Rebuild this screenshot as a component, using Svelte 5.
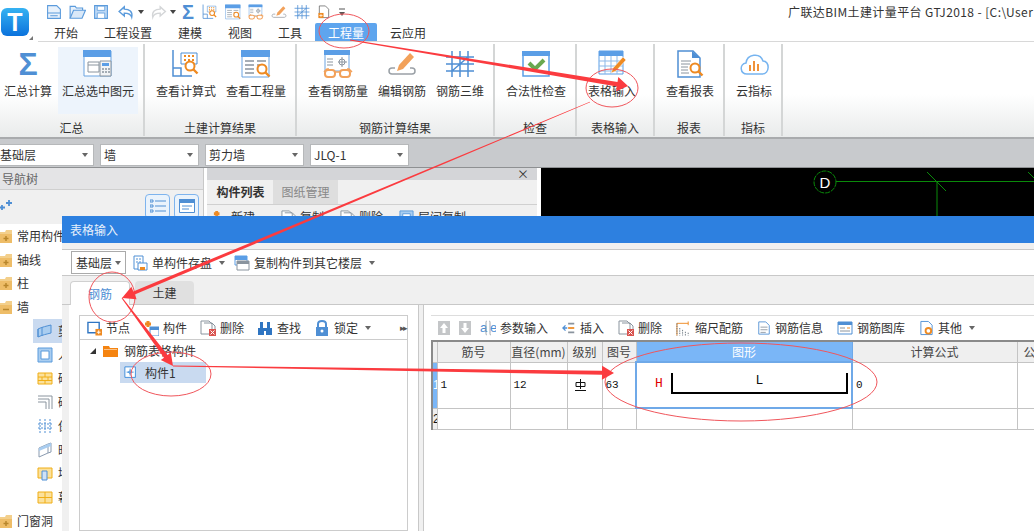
<script>
const qat = [
	["new", 16, 16], ["open", 17, 16], ["save", 16, 16], ["undo", 20, 16], ["caret"], ["redo", 19, 16, true], ["caret"],
	["sigma", 14, 16], ["calcview", 16, 16], ["qtyview", 16, 16], ["glasses", 16, 16], ["pencil", 16, 16], ["rebar3d", 16, 16], ["doc", 14, 16], ["more"]
];

const tabs = ["开始", "工程设置", "建模", "视图", "工具", "工程量", "云应用"];

const groups = [
	{ title: "汇总", width: 145, pad: 0, items: [["sigma", "汇总计算"], ["winCalc", "汇总选中图元", true]] },
	{ title: "土建计算结果", width: 152, pad: 6, items: [["calcview", "查看计算式"], ["qtyview", "查看工程量"]] },
	{ title: "钢筋计算结果", width: 198, pad: 6, items: [["glasses", "查看钢筋量"], ["pencil", "编辑钢筋"], ["rebar3d", "钢筋三维"]] },
	{ title: "检查", width: 82, pad: 6, items: [["check", "合法性检查"]] },
	{ title: "表格输入", width: 78, pad: 6, items: [["tablePen", "表格输入"]] },
	{ title: "报表", width: 70, pad: 6, items: [["report", "查看报表"]] },
	{ title: "指标", width: 58, pad: 6, items: [["cloud", "云指标"]] }
];

const combos = ["基础层", "墙", "剪力墙", "JLQ-1"];

const navTree = [
	["fplus", "常用构件", 0], ["fplus", "轴线", 0], ["fplus", "柱", 0], ["fminus", "墙", 0],
	["wall", "剪力墙", 1, true], ["door", "人防门框墙", 1], ["brick", "砌体墙", 1], ["corner", "砌体加筋", 1],
	["dots", "保温墙", 1], ["box", "暗梁", 1], ["brickbox", "墙垛", 1], ["curtain", "幕墙", 1], ["fplus", "门窗洞", 0]
];

const leftTools = [["node", "节点", 15], ["part", "构件", 16], ["del", "删除", 16], ["binoc", "查找", 16], ["lock", "锁定", 16, true]];
const gridTools = [["ajc", "参数输入", 16], ["insert", "插入", 14], ["del", "删除", 16], ["scale", "缩尺配筋", 15], ["info", "钢筋信息", 14], ["lib", "钢筋图库", 16], ["other", "其他", 15, true]];

// these are drawn on a 16 box, the ribbon ones on 30x28
const small = new Set(["fplus", "fminus", "wall", "door", "brick", "corner", "dots", "box", "brickbox", "curtain", "node", "part", "del", "binoc", "lock", "ajc", "insert", "scale", "info", "lib", "other", "store", "copy", "leaf"]);

// red markup drawn on top of the screenshot
const ellipses = [
	[344, 31, 25, 17], [612, 88, 26, 19], [112, 297, 23, 25], [171, 374, 40, 22], [741, 382, 136, 39]
];
const arrows = [
	[350, 40, 628, 86, 1, 4.5, 11, 5],
	[590, 102, 122, 298, 0.6, 3.5, 13, 5],
	[122, 298, 173, 366, 1, 4.5, 12, 4],
	[173, 366, 614, 373, 0.8, 4, 12, 5]
];

function arrowPoints([x1, y1, x2, y2, w1, w2, hl, hw]) {
	const len = Math.hypot(x2 - x1, y2 - y1);
	const ux = (x2 - x1) / len, uy = (y2 - y1) / len;
	const nx = -uy, ny = ux;
	const bx = x2 - ux * hl, by = y2 - uy * hl;
	const pts = [
		[x1 + nx * w1 / 2, y1 + ny * w1 / 2],
		[bx + nx * w2 / 2, by + ny * w2 / 2],
		[bx + nx * (w2 / 2 + hw), by + ny * (w2 / 2 + hw)],
		[x2, y2],
		[bx - nx * (w2 / 2 + hw), by - ny * (w2 / 2 + hw)],
		[bx - nx * w2 / 2, by - ny * w2 / 2],
		[x1 - nx * w1 / 2, y1 - ny * w1 / 2]
	];
	return pts.map(p => p[0].toFixed(1) + "," + p[1].toFixed(1)).join(" ");
}
</script>

{#snippet lens(cx, cy)}
	<circle cx={cx} cy={cy} r="4.5" fill="#fff" stroke="#ee8a22" stroke-width="2" />
	<path d="M{cx + 3} {cy + 3}l4.5 4.5" stroke="#ee8a22" stroke-width="2.4" />
{/snippet}

{#snippet folder(sign)}
	<path d="M0 4h5l1-2h6v12H0z" fill="#f3cf8b" />
	<path d="M0 6h12v9H0z" fill="#eebd68" />
	{#if sign === "plus"}
		<path d="M6 8v5M3.500 10.500h5" stroke="#b8862c" stroke-width="1.500" />
	{:else}
		<path d="M3 10.500h6" stroke="#b8862c" stroke-width="1.500" />
	{/if}
{/snippet}

{#snippet icon(name, w = 30, h = 28, ghost = false)}
	{#if name === "sigma"}
		<span class="sigma" style:font-size="{h + 4}px" style:width="{w}px" style:height="{h}px">Σ</span>
	{:else if name === "caret"}
		<span class="caret dark"></span>
	{:else if name === "more"}
		<svg width="8" height="12" viewBox="0 0 8 12"><path d="M1 3h6" stroke="#555" /><path d="M1 6h6l-3 4z" fill="#555" /></svg>
	{:else}
		<svg class="glyph" width={w} height={h} viewBox={small.has(name) ? "0 0 16 16" : "0 0 30 28"}>
			{#if name === "new"}
				<path d="M3 2h17l7 7v17H3z" fill="#e8f1fb" stroke="#5b9bdc" stroke-width="2" /><path d="M3 16h24M8 21h14" stroke="#5b9bdc" stroke-width="2" />
			{:else if name === "open"}
				<path d="M2 25V4h9l2 3h11v4" fill="#e8f1fb" stroke="#5b9bdc" stroke-width="2" /><path d="M2 25l6-14h21l-6 14z" fill="#d9e8f8" stroke="#5b9bdc" stroke-width="2" />
			{:else if name === "save"}
				<path d="M3 2h24v24H3z" fill="#bcd8f5" stroke="#5b9bdc" stroke-width="2" /><path d="M8 3h14v8H8zM8 16h14v10H8z" fill="#fff" stroke="#5b9bdc" stroke-width="1.500" />
			{:else if name === "undo" || name === "redo"}
				<g transform={name === "redo" ? "translate(30 0) scale(-1 1)" : ""} fill="none" stroke={ghost ? "#d4d6d8" : "#5b9bdc"} stroke-width="2.500">
					<path d="M12 5L3 13l9 8v-5c7 0 11 1 13 7 2-10-4-14-13-14z" />
				</g>
			{:else if name === "winCalc"}
				<path d="M1 1h27v25H1z" fill="#fff" stroke="#6aa3e0" /><path d="M0 0h28v7H0z" fill="#5b9ee6" />
				<path d="M5 12h11v10H5zM5 15h11" fill="none" stroke="#8a949e" />
				<path d="M17 11h11v15H17z" fill="#f2f4f6" stroke="#8a949e" /><path d="M19 13h7v3h-7z" fill="#5b9ee6" /><path d="M19 19h2M22 19h2M25 19h2M19 22h2M22 22h2M25 22h2" stroke="#8a949e" stroke-width="1.500" />
			{:else if name === "calcview"}
				<path d="M2 0v26h19M2 18h8v8" fill="none" stroke="#4f8fd4" stroke-width="1.500" />
				<path d="M10 3h16v11H10z" fill="#fff" stroke="#4f8fd4" /><path d="M13 6h2M17 6h2M21 6h2M13 10h2M17 10h2M21 10h2" stroke="#ee8a22" stroke-width="2" />
				{@render lens(19, 16)}
			{:else if name === "qtyview"}
				<path d="M1 1h27v26H1z" fill="#fff" stroke="#6aa3e0" /><path d="M0 0h29v7H0z" fill="#5b9ee6" />
				<path d="M4 11h9M16 11h9M4 15h9M16 15h6M4 19h9M4 23h9" stroke="#8a949e" stroke-width="1.300" />
				{@render lens(21, 19)}
			{:else if name === "glasses"}
				<path d="M2 1h24v20H2z" fill="#fff" stroke="#6aa3e0" /><path d="M1 0h26v5H1z" fill="#5b9ee6" />
				<path d="M4 9h6M4 12h6M4 15h6M19 7v10M15 12h9" stroke="#8a949e" /><circle cx="19" cy="12" r="3" fill="none" stroke="#8a949e" />
				<path d="M1 22l3-3h2M29 22l-3-3h-2M12 22h5" stroke="#f2a15a" stroke-width="1.500" fill="none" /><rect x="2" y="20" width="10" height="7" rx="3" fill="#fff" stroke="#f2a15a" stroke-width="2" /><rect x="17" y="20" width="10" height="7" rx="3" fill="#fff" stroke="#f2a15a" stroke-width="2" />
			{:else if name === "pencil"}
				<path d="M8 18H5c-4 0-4 6 0 6h20c4 0 4-6 0-6h-2" fill="none" stroke="#9aa0a6" stroke-width="1.500" />
				<path d="M23 3l4 4-11 12-6 2 2-6z" fill="#f2a15a" />
			{:else if name === "rebar3d"}
				<path d="M1 7h28M1 14h28M1 21h28M7 1v26M15 1v26M23 1v26M7 21L23 7" fill="none" stroke="#4f8fd4" stroke-width="1.500" />
			{:else if name === "doc"}
				<path d="M5 1h13l7 7v18H5z" fill="#fff" stroke="#555" stroke-width="1.500" /><path d="M3 16h11v11H3z" fill="#ee8a22" /><path d="M8.500 18v7M5 21.500h7" stroke="#fff" stroke-width="1.500" />
			{:else if name === "check"}
				<path d="M2 2h26v24H2z" fill="#fff" stroke="#5b9ee6" stroke-width="1.500" /><path d="M1 1h28v5H1z" fill="#5b9ee6" />
				<path d="M8 13l6 6 9-9" fill="none" stroke="#69a84f" stroke-width="4" />
			{:else if name === "tablePen"}
				<path d="M2 1h24v23H2z" fill="#fff" stroke="#5b9ee6" /><path d="M2 1h24v5H2z" fill="#5b9ee6" />
				<path d="M2 11h24M2 16h24M2 21h24M8 6v18M14 6v18M20 6v18" stroke="#8db9e8" />
				<path d="M26 7l3 3-10 11-5 2 2-5z" fill="#ee8a22" stroke="#fff" stroke-width=".5" />
			{:else if name === "report"}
				<path d="M3 1h15l7 7v19H3z" fill="#fff" stroke="#4f8fd4" stroke-width="1.500" /><path d="M17 1l8 7h-8z" fill="#4f8fd4" />
				<path d="M6 11h10M6 14h9M6 17h7M6 20h7M6 23h8" stroke="#8a949e" />
				{@render lens(20, 18)}
			{:else if name === "cloud"}
				<path d="M8 24C1 24 0 14 7 13c1-9 14-11 17-2 7 0 7 13-1 13z" fill="#fff" stroke="#76b4f0" stroke-width="1.500" />
				<path d="M11 15v6M15 11v10M19 14v7" stroke="#f0923a" stroke-width="2" />
			{:else if name === "fplus"}
				{@render folder("plus")}
			{:else if name === "fminus"}
				{@render folder("minus")}
			{:else if name === "wall"}
				<path d="M1 6c4-2 9-3 13-4v8c-4 1-9 2-13 4z" fill="#a9cdf0" stroke="#4f8fd4" /><path d="M1 6v8M5 4v9" stroke="#4f8fd4" />
			{:else if name === "door"}
				<path d="M1 1h14v14H1z" fill="#a9cdf0" stroke="#5b9bdc" /><path d="M4 4h8v8H4z" fill="#fff" stroke="#5b9bdc" />
			{:else if name === "brick" || name === "curtain"}
				<path d="M1 3h14v11H1z" fill="#fbe19c" stroke="#f0ae16" />
				{#if name === "brick"}<path d="M1 7h14M1 10.500h14M8 3v4M5 7v3.500M11 7v3.500M8 10.500V14" stroke="#f0ae16" />{:else}<path d="M1 8.500h14M8 3v11" stroke="#f0ae16" />{/if}
			{:else if name === "corner"}
				<path d="M1 2h14v13M1 5h11v10M1 8h8v7" fill="none" stroke="#8a949e" />
			{:else if name === "dots"}
				<path d="M3 1v14M8 1v14M13 1v14M1 6h14M1 10h14" stroke="#4f8fd4" stroke-dasharray="2 1" />
			{:else if name === "box"}
				<path d="M2 6l9-4v9l-9 4zM11 2l3-1v9l-3 1" fill="#fff" stroke="#8a9bb0" /><path d="M2 6l9-4 3-1v3l-12 5z" fill="#a9cdf0" />
			{:else if name === "brickbox"}
				<path d="M1 3h14v10H1z" fill="#fbe19c" stroke="#f0ae16" /><path d="M5 6h5v9H5z" fill="#cfe2f6" stroke="#4f8fd4" />
			{:else if name === "store"}
				<path d="M2 1h9v13H2z" fill="#fff" stroke="#4f8fd4" /><path d="M4 4h2M7 4h2M4 7h2M7 7h2" stroke="#4f8fd4" /><path d="M6 8h9v7H6z" fill="#fff" stroke="#4f8fd4" /><path d="M8 12h5v3H8z" fill="#ee8a22" />
			{:else if name === "copy"}
				<path d="M1 1h12v4H1z" fill="#5b9ee6" /><path d="M1 1h12v9H1z" fill="none" stroke="#5b9ee6" /><path d="M3 6h12v9H3z" fill="#fff" stroke="#8a949e" /><path d="M3 6h12v3H3z" fill="#8a949e" />
			{:else if name === "node"}
				<path d="M1 2h12v11H1z" fill="#fff" stroke="#2f75c2" stroke-width="1.500" /><path d="M9 9h7v7H9z" fill="#ee8a22" /><path d="M12.500 10.500v4M10.500 12.500h4" stroke="#fff" />
			{:else if name === "part"}
				<path d="M2 4h6M5 1v6" stroke="#ee8a22" stroke-width="3" /><path d="M7 7h9v9H7z" fill="#fff" stroke="#4f8fd4" /><path d="M7 7h9v3H7z" fill="#4f8fd4" />
			{:else if name === "del"}
				<path d="M1 1h8l3 3v10H1z" fill="#fff" stroke="#8a949e" /><path d="M4 3h8l3 3v4" fill="none" stroke="#8a949e" /><path d="M9 9h7v7H9z" fill="#d9534f" /><path d="M10.500 10.500l4 4M14.500 10.500l-4 4" stroke="#fff" />
			{:else if name === "binoc"}
				<path d="M1 8h6v7H1zM9 8h6v7H9zM3 2h3v6H3zM10 2h3v6h-3zM6 8h4v3H6z" fill="#2f75c2" />
			{:else if name === "lock"}
				<path d="M4 7V4c0-4 8-4 8 0v3" fill="none" stroke="#4f8fd4" stroke-width="2" /><path d="M2 7h12v9H2z" fill="#4f8fd4" /><circle cx="8" cy="11" r="1.500" fill="#fff" />
			{:else if name === "ajc"}
				<text x="0" y="12" class="svgtxt">a</text><path d="M7 1c-1 0-1 1-1 2v10c0 1 0 2 1 2M9 1c1 0 1 1 1 2v10c0 1 0 2 1 2" fill="none" stroke="#8a949e" stroke-width=".8" /><text x="10" y="12" class="svgtxt">e</text>
			{:else if name === "insert"}
				<path d="M7 3h7M7 13h7" stroke="#8a949e" stroke-width="2" /><path d="M7 8h7" stroke="#ee8a22" stroke-width="2" /><path d="M6 8H1m3-3L1 8l3 3" fill="none" stroke="#4f8fd4" stroke-width="1.500" />
			{:else if name === "scale"}
				<path d="M1 3v13M1 3h12M13 1v4" stroke="#ee8a22" /><path d="M1 3v13M4 8v8M7 10v6M10 12v4M13 13v3" stroke="#6b7680" stroke-dasharray="1.500 1" />
			{:else if name === "info"}
				<path d="M2 1h8l4 4v10H2z" fill="#fff" stroke="#4f8fd4" /><path d="M4 7h8M4 10h8M4 13h6" stroke="#8a949e" />
			{:else if name === "lib"}
				<path d="M1 2h14v12H1z" fill="#fff" stroke="#4f8fd4" /><path d="M1 2h14v3H1z" fill="#4f8fd4" /><path d="M3 8h5M3 11h10" stroke="#8a949e" /><path d="M10 8h3" stroke="#ee8a22" />
			{:else if name === "other"}
				<path d="M2 1h8l4 4v10H2z" fill="#fff" stroke="#4f8fd4" /><circle cx="10" cy="11" r="3" fill="#fff" stroke="#ee8a22" stroke-width="2" />
			{:else if name === "leaf"}
				<path d="M1 1h12v12H1z" fill="#fff" stroke="#2f85d8" /><path d="M7 3v8M3 7h8" stroke="#2f85d8" /><path d="M7 5L5 7l2 2" fill="none" stroke="#2f85d8" />
			{/if}
		</svg>
	{/if}
{/snippet}

{#snippet tool(item)}
	<span class="tool">
		{@render icon(item[0], item[2], 16)}
		<span>{item[1]}</span>
		{#if item[3]}<span class="caret"></span>{/if}
	</span>
{/snippet}

<div class="app">
	<header class="top">
		<div class="logo-col">
			<div class="logo">T</div>
			<span class="grip"></span>
		</div>
		<div class="top-main">
			<div class="qat">
				{#each qat as q}
					{@render icon(q[0], q[1], q[2], q[3])}
				{/each}
				<div class="title">广联达BIM土建计量平台 GTJ2018 - [C:\User</div>
			</div>
			<nav class="tabs">
				{#each tabs as t}
					<span class="tab" class:on={t === "工程量"}>{t}</span>
				{/each}
			</nav>
		</div>
	</header>

	<section class="ribbon">
		{#each groups as g}
			<div class="group" style:width="{g.width}px" style:padding-left="{g.pad}px">
				<div class="btns">
					{#each g.items as b}
						<div class="btn" class:hot={b[2]}>
							<div class="ico">{@render icon(b[0], 30, 28)}</div>
							<span>{b[1]}</span>
						</div>
					{/each}
				</div>
				<div class="glabel" style:margin-left="-{g.pad}px">{g.title}</div>
			</div>
		{/each}
	</section>

	<div class="combos">
		{#each combos as c}
			<div class="combo"><span>{c}</span><span class="caret"></span></div>
		{/each}
	</div>

	<div class="work">
		<aside class="nav">
			<div class="nav-head">导航树</div>
			<div class="nav-tools">
				<span class="addmark">
					<svg width="14" height="12" viewBox="0 0 14 12"><path d="M9 1v6M6 4h6M2 6v5M0 8.500h5" stroke="#4f8fd4" stroke-width="1.800" /></svg>
				</span>
				<span class="nav-btn"><svg width="16" height="14" viewBox="0 0 16 14"><path d="M0 1h3v2H0zM0 6h3v2H0zM0 11h3v2H0zM5 2h11M5 7h11M5 12h11" fill="none" stroke="#4f8fd4" /></svg></span>
				<span class="nav-btn"><svg width="16" height="14" viewBox="0 0 16 14"><path d="M.5.5h15v13H.500z" fill="#fff" stroke="#4f8fd4" /><path d="M0 0h16v4H0z" fill="#4f8fd4" /><path d="M3 7h10M3 10h7" stroke="#4f8fd4" /></svg></span>
			</div>
			<ul class="nav-tree">
				{#each navTree as n}
					<li class:sub={n[2]} class:sel={n[3]}>
						{@render icon(n[0], 16, 16)}
						<span>{n[1]}</span>
					</li>
				{/each}
			</ul>
		</aside>
		<section class="list">
			<div class="list-strip"><span>×</span></div>
			<div class="list-tabs">
				<span class="ltab on">构件列表</span>
				<span class="ltab">图纸管理</span>
			</div>
			<div class="list-tools">
				{#each [["part", "新建"], ["del", "复制"], ["del", "删除"], ["door", "层间复制"]] as t}
					<span class="tool">{@render icon(t[0], 15, 15)}<span>{t[1]}</span></span>
				{/each}
			</div>
		</section>
		<div class="canvas">
			<svg width="493" height="48" viewBox="541 168 493 48">
				<circle cx="825" cy="182" r="11" fill="none" stroke="#0a8a0a" stroke-dasharray="5 1" />
				<text x="825" y="187.500" class="axis">D</text>
				<path d="M836 181.500h198M927 172l19 19M937 181v35M1028 172l7 7" fill="none" stroke="#0a8a0a" />
			</svg>
		</div>
	</div>

	<div class="dialog">
		<div class="dlg-title">表格输入</div>
		<div class="dlg-toolbar">
			<div class="floor"><span>基础层</span><span class="caret"></span></div>
			<span class="tool">{@render icon("store", 16, 16)}<span>单构件存盘</span><span class="caret"></span></span>
			<span class="tool">{@render icon("copy", 16, 16)}<span>复制构件到其它楼层</span><span class="caret"></span></span>
		</div>
		<div class="dlg-tabs">
			<span class="dtab on">钢筋</span>
			<span class="dtab">土建</span>
		</div>
		<div class="dlg-body">
			<div class="left-pane">
				<div class="bar left-bar">
					{#each leftTools as t}
						{@render tool(t)}
					{/each}
					<span class="chev">▸▸</span>
				</div>
				<div class="tree">
					<div class="tree-root">
						<span class="tri"></span>
						<svg width="15" height="14" viewBox="0 0 15 14"><path d="M0 2h6l1 2h8v9H0z" fill="#f58410" /><path d="M1 5h13v1H1z" fill="#fff" opacity=".5" /></svg>
						<span>钢筋表格构件</span>
					</div>
					<div class="tree-leaf">
						{@render icon("leaf", 14, 14)}
						<span>构件1</span>
					</div>
				</div>
			</div>
			<div class="split"></div>
			<div class="right-pane">
				<div class="bar grid-bar">
					<span class="updown"><svg width="12" height="14" viewBox="0 0 12 14"><path d="M0 0h12v14H0z" fill="#c4c6c8" /><path d="M6 2L2 7h2.500v5h3V7H10z" fill="#fff" /></svg></span>
					<span class="updown"><svg width="12" height="14" viewBox="0 0 12 14"><path d="M0 0h12v14H0z" fill="#c4c6c8" /><path d="M6 12L2 7h2.500V2h3v5H10z" fill="#fff" /></svg></span>
					{#each gridTools as t}
						{@render tool(t)}
					{/each}
				</div>
				<table class="grid">
					<colgroup>
						<col class="c0" /><col class="c1" /><col class="c2" /><col class="c3" /><col class="c4" /><col class="c5" /><col class="c6" /><col class="c7" />
					</colgroup>
					<thead>
						<tr>
							<th></th><th>筋号</th><th>直径(mm)</th><th>级别</th><th>图号</th><th class="hl">图形</th><th>计算公式</th><th class="last">公</th>
						</tr>
					</thead>
					<tbody>
						<tr class="r1">
							<td class="rh on">1</td>
							<td>1</td><td>12</td>
							<td>
								<svg class="grade" width="13" height="14" viewBox="0 0 13 14"><path d="M2 4.500h9v4H2zM6.500 1v10M1 12.500h11" fill="none" stroke="#111" /></svg>
							</td>
							<td>63</td>
							<td class="shape-cell">
								<div class="shape">
									<span class="h">H</span>
									<div class="bracket"><span>L</span></div>
								</div>
							</td>
							<td>0</td><td></td>
						</tr>
						<tr class="r2">
							<td class="rh">2</td><td></td><td></td><td></td><td></td><td></td><td></td><td></td>
						</tr>
					</tbody>
				</table>
			</div>
		</div>
	</div>

	<svg class="markup" width="1034" height="531" viewBox="0 0 1034 531">
		{#each ellipses as e}
			<ellipse cx={e[0]} cy={e[1]} rx={e[2]} ry={e[3]} fill="none" stroke="#f0565c" />
		{/each}
		{#each arrows as a}
			<polygon points={arrowPoints(a)} fill="#fb3b3f" />
		{/each}
	</svg>
</div>

<style>
:global(body) { margin: 0; }
.app {
	position: relative;
	width: 1034px;
	height: 531px;
	overflow: hidden;
	background: #fff;
	color: #333;
	font: 12px/16px "Noto Sans CJK SC", "Liberation Sans", sans-serif;
}
.glyph { flex: none; }
.top { display: flex; height: 42px; }
.logo-col { position: relative; width: 38px; flex: none; }
.logo {
	margin: 8px 0 0 1px;
	width: 28px;
	height: 28px;
	border-radius: 6px;
	background: linear-gradient(#35b2f2, #0b72dc);
	color: #fff;
	font: bold 25px/28px "Liberation Sans", sans-serif;
	text-align: center;
}
.grip {
	position: absolute;
	left: 29px;
	top: 36px;
	border-left: 4px solid transparent;
	border-bottom: 4px solid #777;
}
.top-main { flex: 1; min-width: 0; }
.qat { display: flex; align-items: center; gap: 7px; height: 23px; padding-left: 8px; }
.title { margin-left: auto; width: 246px; flex: none; white-space: nowrap; overflow: hidden; letter-spacing: .4px; }
.sigma {
	display: inline-flex;
	align-items: center;
	justify-content: center;
	color: #4f8fd4;
	font-family: "Liberation Sans", sans-serif;
	font-weight: bold;
	line-height: 1;
}
.caret {
	display: inline-block;
	width: 0;
	height: 0;
	border: 3px solid transparent;
	border-top: 4px solid #666;
	border-bottom: 0;
	flex: none;
}
.caret.dark { border-top-color: #444; margin: 0 -2px 0 -5px; }
.tabs { display: flex; padding-left: 3px; border-bottom: 1px solid #d8d8d8; height: 18px; }
.tab { padding: 0 13px; line-height: 19px; height: 18px; }
.tab.on { background: #5ea5ee; color: #fff; border-radius: 2px 2px 0 0; }
.ribbon {
	display: flex;
	height: 97px;
	box-sizing: border-box;
	background: linear-gradient(#fff 55%, #e9ebeb);
	border-bottom: 2px solid #a9abad;
}
.group {
	display: flex;
	flex-direction: column;
	box-sizing: border-box;
	border-right: 2px solid #d4d6d6;
	margin: 2px 0 1px;
	height: 92px;
}
.btns { display: flex; height: 67px; margin-top: 3px; }
.btn { display: flex; flex-direction: column; align-items: center; padding: 0 5px; white-space: nowrap; }
.group:first-child .btn:first-child { padding: 0 4px; }
.btn.hot { background: #edf4fc; padding: 0 4px; margin-left: 2px; width: 72px; }
.ico { height: 35px; padding-top: 3px; box-sizing: border-box; margin-bottom: 1px; display: flex; justify-content: center; }
.glabel { margin-top: auto; text-align: center; }
.combos {
	display: flex;
	gap: 6px;
	height: 29px;
	box-sizing: border-box;
	padding-top: 5px;
	background: #c8cacd;
	border-bottom: 1px solid #8e9092;
}
.combo {
	display: flex;
	align-items: center;
	justify-content: space-between;
	box-sizing: border-box;
	width: 99px;
	height: 22px;
	padding: 0 5px 0 3px;
	background: #fff;
	border: 1px solid #b6b8ba;
}
.combo:first-child { width: 94px; padding-left: 0; border-left: 0; }
.work { display: flex; height: 363px; }
.nav { width: 203px; flex: none; background: #f0f0f0; border-right: 1px solid #c8c8c8; }
.nav-head { height: 21px; line-height: 21px; padding-left: 2px; background: #e4e4e6; color: #666; border-bottom: 1px solid #cfcfcf; }
.nav-tools { display: flex; align-items: center; gap: 4px; height: 32px; padding-right: 4px; }
.addmark { margin-right: auto; }
.nav-btn {
	display: flex;
	align-items: center;
	justify-content: center;
	width: 25px;
	height: 25px;
	box-sizing: border-box;
	border: 1px solid #7eb4ee;
	border-radius: 4px;
	background: #eaf3fc;
}
.nav-tree { list-style: none; width: 62px; overflow: hidden; margin: 2px 0 0; padding: 0; background: #fff; }
.nav-tree li { display: flex; align-items: center; gap: 1px; height: 23.750px; white-space: nowrap; }
.nav-tree li.sub { padding-left: 37px; gap: 5px; }
.nav-tree li.sel { background: linear-gradient(90deg, #fff 33px, #c9daf0 33px); }
.list { width: 330px; flex: none; margin-left: 3px; background: #f0f0f0; }
.list-strip { height: 12px; background: #d4d5d8; text-align: right; padding-right: 8px; line-height: 12px; }
.list-tabs { display: flex; height: 24px; align-items: stretch; border-bottom: 1px solid #d0d0d0; }
.ltab { display: flex; align-items: center; justify-content: center; width: 65px; background: #dedede; color: #888; }
.ltab.on { background: #f0f0f0; color: #333; font-weight: bold; margin-left: 1px; }
.list-tools { display: flex; gap: 16px; padding: 4px 5px; }
.list-tools .tool:first-child { margin-right: 10px; }
.canvas { flex: 1; margin-left: 4px; background: #000; }
.canvas svg { display: block; }
.axis { font: 15px "Liberation Sans", sans-serif; fill: #fff; text-anchor: middle; }
.svgtxt { font: 13px "Liberation Sans", sans-serif; fill: #4f8fd4; }
.dialog {
	position: absolute;
	left: 62px;
	top: 216px;
	right: 0;
	bottom: 0;
	display: flex;
	flex-direction: column;
	background: #f0f0f0;
	overflow: hidden;
}
.dlg-title { height: 27px; flex: none; line-height: 27px; padding-left: 8px; background: #2d80e0; color: #e8f1fb; }
.dlg-toolbar {
	display: flex;
	align-items: center;
	gap: 6px;
	flex: none;
	height: 27px;
	margin-top: 6px;
	box-sizing: border-box;
	padding-left: 9px;
	background: #fff;
	border-top: 1px solid #c8c8c8;
	border-bottom: 1px solid #c8c8c8;
}
.floor {
	display: flex;
	align-items: center;
	justify-content: space-between;
	box-sizing: border-box;
	width: 55px;
	height: 23px;
	padding: 0 4px;
	border: 1px solid #aaa;
}
.tool { display: inline-flex; align-items: center; gap: 4px; flex: none; white-space: nowrap; }
.tool .caret { margin-left: 3px; }
.dlg-toolbar .tool { margin-right: 3px; }
.dlg-tabs { display: flex; flex: none; gap: 5px; height: 29px; padding: 5px 0 0 8px; box-sizing: border-box; border-bottom: 1px solid #c8c8c8; }
.dtab { width: 59px; line-height: 24px; text-align: center; background: #e0e0e0; border-radius: 4px 4px 0 0; }
.dtab.on { width: 60px; height: 25px; background: #fff; color: #4f8fd4; border: 1px solid #d0d0d0; border-bottom: 0; box-sizing: border-box; }
.dlg-body { display: flex; flex: 1; min-height: 0; margin-left: 7px; background: #fff; }
.left-pane { width: 349px; flex: none; padding: 10px 10px 0 10px; box-sizing: border-box; display: flex; flex-direction: column; }
.bar { display: flex; align-items: center; gap: 13px; box-sizing: border-box; height: 25px; }
.left-bar { border: 1px solid #ccc; padding-left: 7px; }
.chev { margin-left: auto; margin-right: 1px; font-size: 9px; letter-spacing: -2px; color: #555; }
.tree { flex: 1; border: 1px solid #ccc; border-top: 0; }
.tree-root { display: flex; align-items: center; gap: 6px; height: 22px; padding-left: 10px; }
.tri { width: 0; height: 0; border-left: 6px solid transparent; border-bottom: 6px solid #333; margin-right: 1px; }
.tree-leaf { display: flex; align-items: center; gap: 7px; width: 86px; height: 21px; margin-left: 40px; padding-left: 4px; box-sizing: border-box; background: #c9daf0; }
.split { width: 4px; flex: none; background: #f0f0f0; border: 0 solid #c8c8c8; border-width: 0 1px; }
.right-pane { flex: 1; min-width: 0; padding: 10px 0 0 7px; }
.grid-bar { gap: 14px; padding-left: 7px; border-top: 1px solid #ddd; }
.updown { margin-right: -5px; display: flex; }
.grid { table-layout: fixed; width: 644px; border-collapse: collapse; border-left: 2px solid #8a8a8a; border-top: 2px solid #8a8a8a; }
.grid th, .grid td { border: 1px solid #c4c4c4; padding: 0; overflow: hidden; white-space: nowrap; }
.grid th { height: 19px; background: #efefef; font-weight: normal; color: #444; text-align: center; }
.grid th.hl { background: #7ab6f7; color: #fff; border-color: #6fa9e8; }
.grid th.last { text-align: left; padding-left: 6px; }
.grid td { padding-left: 3px; font: 11px "Liberation Mono", monospace; color: #111; }
.grid td.rh { padding: 0; background: #efefef; font: 12px "Liberation Sans", sans-serif; }
.grid td.rh.on { background: #7ab6f7; color: #fff; }
.r1 td { height: 41px; }
.r2 td { height: 20px; }
.c0 { width: 5px; } .c1 { width: 73px; } .c2 { width: 57px; } .c3 { width: 35px; } .c4 { width: 34px; } .c5 { width: 216px; } .c6 { width: 165px; } .c7 { width: 59px; }
.grade { display: block; margin-left: 3px; }
.grid td.shape-cell { padding: 0 0 3px; border: 2px solid #6fa9e8; }
.shape { display: flex; align-items: center; padding-left: 18px; font-size: 13px; }
.h { color: #e00000; width: 16px; }
.bracket {
	width: 177px;
	height: 21px;
	box-sizing: border-box;
	text-align: center;
	border: solid #000;
	border-width: 0 2px 2px;
	line-height: 16px;
}
.markup { position: absolute; left: 0; top: 0; pointer-events: none; }
</style>
